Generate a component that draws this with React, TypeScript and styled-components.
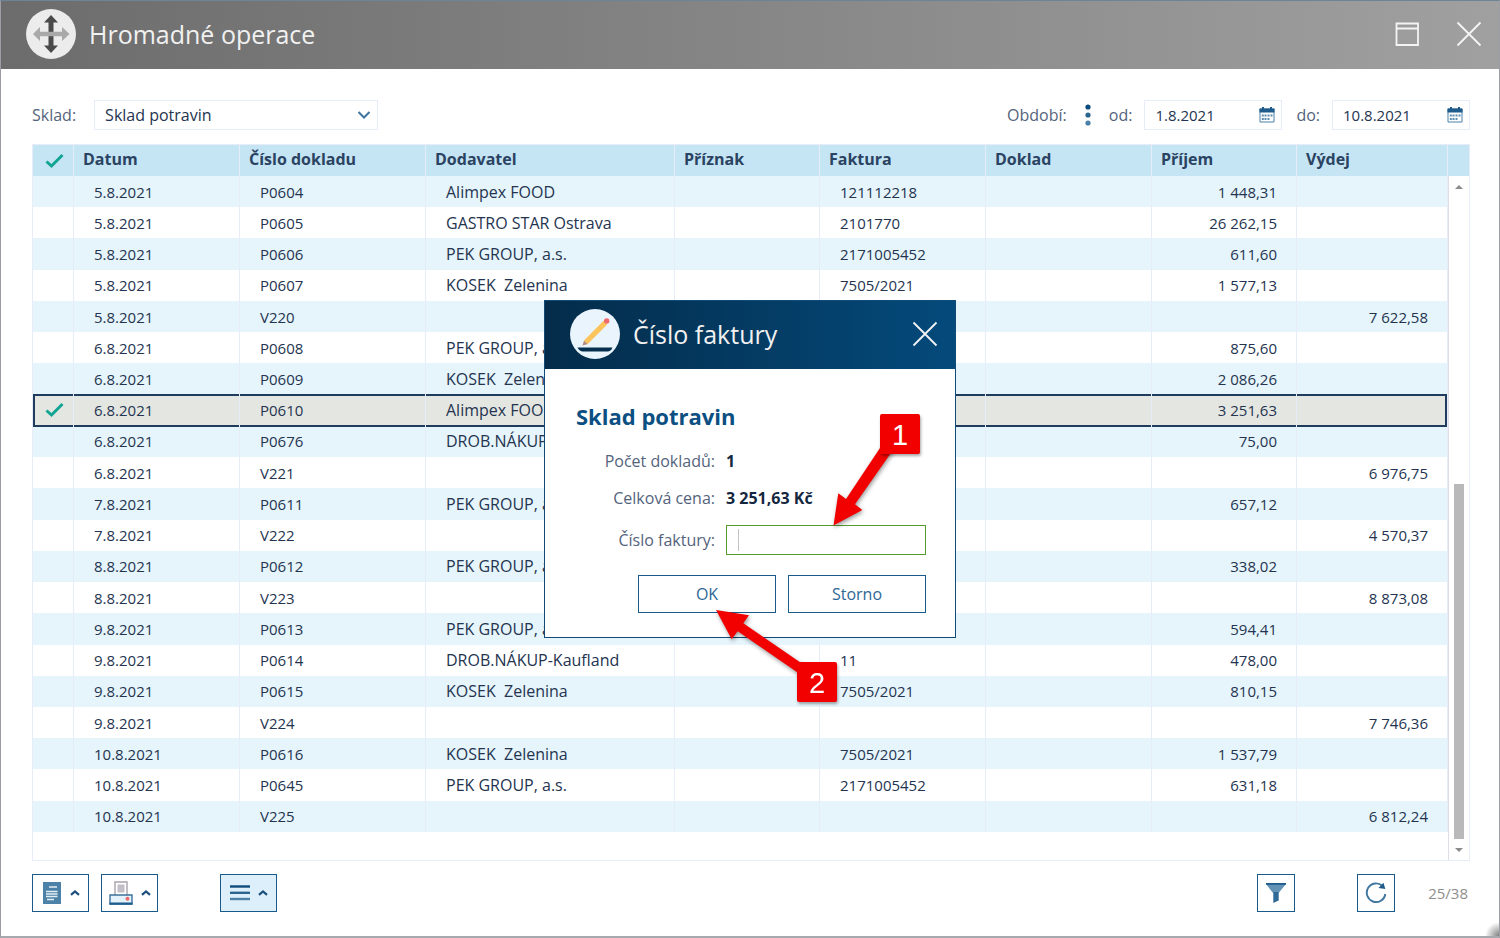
import React from 'react';
import styled, { createGlobalStyle } from 'styled-components';

const color = {
  ink: '#243450',
  label: '#54637c',
  blue: '#1a5a8a',
  navy: '#203c5c',
  line: '#e6edf9',
  head: '#c5e5f4',
  stripe: '#e6f4fb',
  selected: '#e4e6e1',
  green: '#12a594',
};

const GlobalStyle = createGlobalStyle`
  *, *::before, *::after { box-sizing: border-box; }
  body { margin: 0; background: #fff; }
  body, button, input, select {
    font-family: "Open Sans", "Noto Sans", sans-serif;
    font-size: 16px;
    line-height: 20px;
    color: ${color.ink};
  }
  button { cursor: pointer; }
`;

const Window = styled.div`
  position: relative;
  display: flex;
  flex-direction: column;
  min-height: 100vh;
  border: 1px solid #9a9da3;
  border-top-color: #6d8494;
  border-bottom: 2px solid #a6a9ae;
`;

const TitleBar = styled.header`
  display: flex;
  align-items: center;
  height: 68px;
  padding: 0 17px 2px 25px;
  background: linear-gradient(90deg, #6c6c6c, #a0a0a0);
`;

const Title = styled.h1`
  flex: 1;
  margin: 0 0 0 13px;
  font-size: 25px;
  line-height: 32px;
  font-weight: 400;
  color: #f1f1f1;
`;

const IconButton = styled.button`
  display: flex;
  padding: 0;
  border: 0;
  background: none;
  color: #f4f4f4;
`;

const WindowActions = styled.div`
  display: flex;
  gap: 37px;
`;

const Content = styled.main`
  flex: 1;
  display: flex;
  flex-direction: column;
  padding: 31px 29px 24px 31px;
`;

const Toolbar = styled.div`
  display: flex;
  align-items: center;
  justify-content: space-between;
  margin-bottom: 14px;
`;

const Group = styled.div<{ $gap: number }>`
  display: flex;
  align-items: center;
  gap: ${(p) => p.$gap}px;
`;

const Label = styled.label`
  color: ${color.label};
`;

const Field = styled.div<{ $width: number }>`
  display: flex;
  align-items: center;
  width: ${(p) => p.$width}px;
  height: 30px;
  padding-right: 6px;
  border: 1px solid ${color.line};
  background: #fff;
`;

const StoreSelect = styled.select`
  flex: 1;
  min-width: 0;
  height: 28px;
  padding: 0 0 0 10px;
  border: 0;
  appearance: none;
  background: none;
  outline: 0;
`;

const DateInput = styled.input`
  flex: 1;
  min-width: 0;
  height: 28px;
  padding: 0 0 0 10px;
  border: 0;
  background: none;
  outline: 0;
  font-size: 15px;
`;

const Panel = styled.section`
  flex: 1;
  display: flex;
  border: 1px solid ${color.line};
`;

const Grid = styled.div`
  flex: 1;
  min-width: 0;
`;

const Table = styled.table`
  width: 100%;
  height: 687px;
  table-layout: fixed;
  border-collapse: separate;
  border-spacing: 0;
`;

const Col = styled.col<{ $w?: number }>`
  width: ${(p) => (p.$w ? `${p.$w}px` : 'auto')};
`;

const Th = styled.th`
  height: 31px;
  padding: 0 0 3px 9px;
  border-right: 1px solid ${color.line};
  background: ${color.head};
  text-align: left;
  font-weight: 700;
  color: #2b4362;
  white-space: nowrap;
`;

const CheckTh = styled(Th)`
  padding: 0 0 0 12px;
  svg { display: block; }
`;

const Td = styled.td<{ $num?: boolean }>`
  padding: ${(p) => (p.$num ? '0 19px 0 0' : '0 0 0 20px')};
  border-right: 1px solid ${color.line};
  font-size: 15px;
  text-align: ${(p) => (p.$num ? 'right' : 'left')};
  white-space: pre;
  overflow: hidden;
`;

const SupplierTd = styled(Td)`
  font-size: 16px;
`;

const CheckTd = styled(Td)`
  padding-left: 12px;
  svg { display: block; }
`;

const Row = styled.tr<{ $selected?: boolean }>`
  &:nth-child(odd) td { background: ${color.stripe}; }
  &:nth-child(even) td { background: #fff; }
  ${(p) =>
    p.$selected &&
    `
    &:nth-child(n) td { position: relative; overflow: visible; background: ${color.selected}; }
    td::after {
      content: '';
      position: absolute;
      inset: -1px 0;
      border: solid ${color.navy};
      border-width: 2px 0;
    }
    td:first-child::after { border-left-width: 2px; }
    td:last-child::after { border-right-width: 2px; }
  `}
`;

const Scroll = styled.div`
  display: flex;
  flex-direction: column;
  width: 21px;
`;

const ScrollHead = styled.div`
  height: 31px;
  background: ${color.head};
`;

const Track = styled.div`
  flex: 1;
  display: flex;
  flex-direction: column;
  align-items: center;
  padding: 9px 0 8px;
  border-left: 1px solid #dcdfe6;
`;

const TrackSpace = styled.div`
  flex: 295;
`;

const Thumb = styled.div`
  flex: 354;
  width: 10px;
  margin-bottom: 9px;
  background: #b9b9b9;
`;

const Arrow = styled.div<{ $down?: boolean }>`
  width: 8px;
  height: 4px;
  background: #8c8c8c;
  clip-path: ${(p) => (p.$down ? 'polygon(0 0, 100% 0, 50% 100%)' : 'polygon(50% 0, 100% 100%, 0 100%)')};
`;

const Footer = styled.footer`
  display: flex;
  align-items: center;
  margin-top: 13px;
`;

const ToolButton = styled.button<{ $wide?: boolean; $active?: boolean }>`
  display: flex;
  align-items: center;
  justify-content: center;
  gap: 8px;
  width: ${(p) => (p.$wide ? 57 : 38)}px;
  height: 38px;
  padding: 0;
  border: 1px solid ${color.blue};
  background: ${(p) => (p.$active ? '#dceffa' : '#fff')};
  color: ${color.blue};
`;

const FooterLeft = styled.div`
  flex: 1;
  display: flex;
  gap: 12px;
  & > :last-child { margin-left: 50px; }
`;

const FooterRight = styled.div`
  display: flex;
  align-items: center;
  gap: 62px;
`;

const Count = styled.span`
  margin-right: 2px;
  font-size: 15px;
  color: #8e8e8e;
`;

const CountGroup = styled.div`
  display: flex;
  align-items: center;
  gap: 33px;
`;

const ResizeGrip = styled.div`
  position: absolute;
  right: 0;
  bottom: 0;
  width: 14px;
  height: 14px;
  background: radial-gradient(circle at 100% 100%, #808080, rgba(255, 255, 255, 0) 14px);
`;

const Overlay = styled.div`
  position: fixed;
  inset: 0;
  display: flex;
  align-items: center;
  justify-content: center;
`;

const Dialog = styled.div`
  position: relative;
  width: 412px;
  border: 1px solid #124a78;
  background: #fff;
`;

const DialogHead = styled.div`
  display: flex;
  align-items: center;
  height: 68px;
  padding: 0 17px 2px 25px;
  background: linear-gradient(90deg, #042c4a, #044a7b);
`;

const DialogBody = styled.form`
  padding: 31px 29px 24px 31px;
`;

const DialogTitle = styled.h2`
  margin: 0 0 19px;
  font-size: 22px;
  line-height: 32px;
  font-weight: 700;
  color: #0c4f82;
`;

const FormGrid = styled.div`
  display: grid;
  grid-template-columns: 139px 200px;
  column-gap: 11px;
  row-gap: 17px;
  align-items: center;
  margin-bottom: 20px;
  & > :nth-child(odd) { text-align: right; color: ${color.label}; }
`;

const Value = styled.strong`
  font-weight: 700;
  color: #14273f;
`;

const InvoiceField = styled.div`
  display: flex;
  align-items: center;
  height: 30px;
  border: 1px solid #569a2e;
  &::before {
    content: '';
    width: 1px;
    height: 22px;
    margin-left: 11px;
    background: #c4c4c4;
  }
`;

const InvoiceInput = styled.input`
  flex: 1;
  min-width: 0;
  height: 26px;
  padding: 0;
  border: 0;
  outline: 0;
  background: none;
`;

const Buttons = styled.div`
  display: flex;
  justify-content: flex-end;
  gap: 12px;
`;

const DialogButton = styled.button`
  width: 138px;
  height: 38px;
  border: 1px solid ${color.blue};
  background: #fff;
  color: #2f6796;
`;

const Arrows = styled.svg`
  position: absolute;
  left: 0;
  top: 0;
  overflow: visible;
  pointer-events: none;
  filter: drop-shadow(1px 2px 2px rgba(0, 0, 0, 0.4));
`;

const Badge = styled.span<{ $x: number; $y: number }>`
  position: absolute;
  left: ${(p) => p.$x}px;
  top: ${(p) => p.$y}px;
  width: 40px;
  height: 40px;
  border-radius: 2px;
  background: #f20000;
  box-shadow: 1px 2px 3px rgba(0, 0, 0, 0.35);
  font: 29px/42px "Liberation Sans", sans-serif;
  text-align: center;
  color: #fff;
`;

const Check = () => (
  <svg width="19" height="16" viewBox="0 0 19 16" fill="none" stroke={color.green} strokeWidth="3">
    <path d="M1.5 8.5 L6.5 13 L17.5 2" />
  </svg>
);

const Cross = () => (
  <svg width="26" height="26" viewBox="0 0 26 26" fill="none" stroke="currentColor" strokeWidth="1.8">
    <path d="M1.5 1.5 L24.5 24.5 M24.5 1.5 L1.5 24.5" />
  </svg>
);

const Maximize = () => (
  <svg width="24" height="26" viewBox="0 0 24 26" fill="none" stroke="currentColor" strokeWidth="1.8">
    <path d="M1.500 2.500 H23 V24 H1.500 Z M1.500 7.500 H23" />
  </svg>
);

const MoveIcon = () => (
  <svg width="50" height="50" viewBox="0 0 50 50">
    <circle cx="25" cy="25" r="25" fill="#ececec" />
    <path d="M25 6 L32 13.5 H27.5 V36.5 H32 L25 44 L18 36.5 H22.5 V13.5 H18 Z" fill="#4a4a4a" />
    <path d="M7 25 L14 18 V22.7 H36 V18 L43.5 25 L36 32 V27.3 H14 V32 Z" fill="#a9a9a9" />
  </svg>
);

const PencilIcon = () => (
  <svg width="50" height="50" viewBox="0 0 50 50">
    <circle cx="25" cy="25" r="25" fill="#e9f4fc" />
    <path d="M7.500 38.500 H42.500 Q41 42.500 37.500 42.500 H13 Q9.500 42.500 7.500 38.500 Z" fill="#062f4f" />
    <path d="M12.500 36.500 L14 31.500 L18 35 Z" fill="#b58a80" />
    <path d="M14 31.500 L33.500 11.700 L37.200 15.400 L17.800 35 Z" fill="#fcc45c" />
    <circle cx="36.700" cy="12" r="2.700" fill="#f0696b" />
  </svg>
);

const ChevronDown = () => (
  <svg width="14" height="10" viewBox="0 0 14 10" fill="none" stroke="#3f74a0" strokeWidth="2">
    <path d="M1.500 2 L7 7.500 L12.500 2" />
  </svg>
);

const ChevronUp = () => (
  <svg width="10" height="8" viewBox="0 0 10 8" fill="none" stroke="#1b4f7d" strokeWidth="2.200">
    <path d="M1 5.800 L5 2.400 L9 5.800" />
  </svg>
);

const Calendar = () => (
  <svg width="16" height="16" viewBox="0 0 16 16">
    <path d="M1 2 H15 V15 H1 Z" fill="#fff" stroke="#4a81a8" />
    <path d="M.5 1.500 H15.500 V5.500 H.5 Z M3 0 H5 V2 H3 Z M11 0 H13 V2 H11 Z" fill="#1f5b8b" />
    <g fill="#5b8cb0">
      <path d="M5.500 7.500h2v2h-2z M8.500 7.500h2v2h-2z M11.500 7.500h2v2h-2z M2.800 7.500h2v2h-2z" />
      <path d="M2.800 11h2v2h-2z M5.500 11h2v2h-2z M8.500 11h2v2h-2z" />
    </g>
  </svg>
);

const Dots = () => (
  <svg width="6" height="22" viewBox="0 0 6 22">
    <circle cx="3" cy="3" r="2.600" fill="#0d4b7c" />
    <circle cx="3" cy="11" r="2.600" fill="#2a648f" />
    <circle cx="3" cy="19" r="2.600" fill="#4b81a8" />
  </svg>
);

const DocumentIcon = () => (
  <svg width="20" height="22" viewBox="0 0 20 22">
    <rect x="1" width="18" height="22" fill="#4c82a7" />
    <path d="M7 5 H15 M4 9.500 H15.500 M4 12 H15.500 M4 14.500 H15.500 M5 17.500 H12" stroke="#e3edf4" strokeWidth="1.400" />
  </svg>
);

const PrinterIcon = () => (
  <svg width="24" height="24" viewBox="0 0 24 24">
    <path d="M6 15 V1 H18 V15" fill="#fff" stroke="#a8a2ac" strokeWidth="1.400" />
    <rect x="8.500" y="3.500" width="7" height="8" fill="#c3bfc8" />
    <path d="M1 14 H23 V23 H1 Z" fill="#e3f2fb" stroke="#3a739d" strokeWidth="1.400" />
    <path d="M0.500 21.500 H23.500 V23.700 H0.500 Z" fill="#1f5b8b" />
    <circle cx="18.500" cy="17.800" r="2" fill="#f0696b" />
  </svg>
);

const MenuIcon = () => (
  <svg width="20" height="16" viewBox="0 0 20 16" strokeWidth="2.400">
    <path d="M0 1.500 H20" stroke="#0d4b7c" />
    <path d="M0 7.800 H20" stroke="#2a648f" />
    <path d="M0 14 H20" stroke="#4b81a8" />
  </svg>
);

const FilterIcon = () => (
  <svg width="20" height="20" viewBox="0 0 20 20">
    <path d="M0 1 H20 L13 9.500 V10 H7 Z" fill="#6293b5" />
    <path d="M0 0 H20 V1.800 H0 Z" fill="#1f5b8b" />
    <path d="M7.300 9 H12.700 V17.500 L7.300 20 Z" fill="#2f6a97" />
  </svg>
);

const RefreshIcon = () => (
  <svg width="22" height="22" viewBox="0 0 22 22" fill="none">
    <path d="M17.500 4 A9.300 9.300 0 1 0 20.300 12" stroke="#3f77a1" strokeWidth="1.900" />
    <path d="M18.500 .8 L20.300 7 L13.500 6 Z" fill="#1f5b8b" />
  </svg>
);

type Entry = {
  date: string;
  doc: string;
  supplier?: string;
  invoice?: string;
  income?: string;
  outcome?: string;
  selected?: boolean;
};

const entries: Entry[] = [
  { date: '5.8.2021', doc: 'P0604', supplier: 'Alimpex FOOD', invoice: '121112218', income: '1 448,31' },
  { date: '5.8.2021', doc: 'P0605', supplier: 'GASTRO STAR Ostrava', invoice: '2101770', income: '26 262,15' },
  { date: '5.8.2021', doc: 'P0606', supplier: 'PEK GROUP, a.s.', invoice: '2171005452', income: '611,60' },
  { date: '5.8.2021', doc: 'P0607', supplier: 'KOSEK  Zelenina', invoice: '7505/2021', income: '1 577,13' },
  { date: '5.8.2021', doc: 'V220', outcome: '7 622,58' },
  { date: '6.8.2021', doc: 'P0608', supplier: 'PEK GROUP, a.s.', invoice: '2171005452', income: '875,60' },
  { date: '6.8.2021', doc: 'P0609', supplier: 'KOSEK  Zelenina', invoice: '7505/2021', income: '2 086,26' },
  { date: '6.8.2021', doc: 'P0610', supplier: 'Alimpex FOOD', income: '3 251,63', selected: true },
  { date: '6.8.2021', doc: 'P0676', supplier: 'DROB.NÁKUP-Kaufland', invoice: '11', income: '75,00' },
  { date: '6.8.2021', doc: 'V221', outcome: '6 976,75' },
  { date: '7.8.2021', doc: 'P0611', supplier: 'PEK GROUP, a.s.', invoice: '2171005452', income: '657,12' },
  { date: '7.8.2021', doc: 'V222', outcome: '4 570,37' },
  { date: '8.8.2021', doc: 'P0612', supplier: 'PEK GROUP, a.s.', invoice: '2171005452', income: '338,02' },
  { date: '8.8.2021', doc: 'V223', outcome: '8 873,08' },
  { date: '9.8.2021', doc: 'P0613', supplier: 'PEK GROUP, a.s.', invoice: '2171005452', income: '594,41' },
  { date: '9.8.2021', doc: 'P0614', supplier: 'DROB.NÁKUP-Kaufland', invoice: '11', income: '478,00' },
  { date: '9.8.2021', doc: 'P0615', supplier: 'KOSEK  Zelenina', invoice: '7505/2021', income: '810,15' },
  { date: '9.8.2021', doc: 'V224', outcome: '7 746,36' },
  { date: '10.8.2021', doc: 'P0616', supplier: 'KOSEK  Zelenina', invoice: '7505/2021', income: '1 537,79' },
  { date: '10.8.2021', doc: 'P0645', supplier: 'PEK GROUP, a.s.', invoice: '2171005452', income: '631,18' },
  { date: '10.8.2021', doc: 'V225', outcome: '6 812,24' },
];

const headings = ['Datum', 'Číslo dokladu', 'Dodavatel', 'Příznak', 'Faktura', 'Doklad', 'Příjem', 'Výdej'];

export default function App() {
  return (
    <>
      <GlobalStyle />
      <Window>
        <TitleBar>
          <MoveIcon />
          <Title>Hromadné operace</Title>
          <WindowActions>
            <IconButton aria-label="Maximalizovat"><Maximize /></IconButton>
            <IconButton aria-label="Zavřít"><Cross /></IconButton>
          </WindowActions>
        </TitleBar>
        <Content>
          <Toolbar>
            <Group $gap={18}>
              <Label htmlFor="store">Sklad:</Label>
              <Field $width={284}>
                <StoreSelect id="store"><option>Sklad potravin</option></StoreSelect>
                <ChevronDown />
              </Field>
            </Group>
            <Group $gap={14}>
              <Group $gap={18}>
                <Label as="span">Období:</Label>
                <Dots />
                <Group $gap={12}>
                  <Label htmlFor="from">od:</Label>
                  <Field $width={138}>
                    <DateInput id="from" defaultValue="1.8.2021" />
                    <Calendar />
                  </Field>
                </Group>
              </Group>
              <Group $gap={12}>
                <Label htmlFor="to">do:</Label>
                <Field $width={138}>
                  <DateInput id="to" defaultValue="10.8.2021" />
                  <Calendar />
                </Field>
              </Group>
            </Group>
          </Toolbar>
          <Panel>
            <Grid>
              <Table>
                <colgroup>
                  <Col $w={41} />
                  <Col $w={166} />
                  <Col $w={186} />
                  <Col />
                  <Col $w={145} />
                  <Col $w={166} />
                  <Col $w={166} />
                  <Col $w={145} />
                  <Col $w={151} />
                </colgroup>
                <thead>
                  <tr>
                    <CheckTh aria-label="Výběr"><Check /></CheckTh>
                    {headings.map((h) => <Th key={h}>{h}</Th>)}
                  </tr>
                </thead>
                <tbody>
                  {entries.map((e) => (
                    <Row key={e.doc} $selected={e.selected}>
                      <CheckTd>{e.selected && <Check />}</CheckTd>
                      <Td>{e.date}</Td>
                      <Td>{e.doc}</Td>
                      <SupplierTd>{e.supplier}</SupplierTd>
                      <Td />
                      <Td>{e.invoice}</Td>
                      <Td />
                      <Td $num>{e.income}</Td>
                      <Td $num>{e.outcome}</Td>
                    </Row>
                  ))}
                </tbody>
              </Table>
            </Grid>
            <Scroll>
              <ScrollHead />
              <Track>
                <Arrow />
                <TrackSpace />
                <Thumb />
                <Arrow $down />
              </Track>
            </Scroll>
          </Panel>
          <Footer>
            <FooterLeft>
              <ToolButton $wide aria-label="Doklady"><DocumentIcon /><ChevronUp /></ToolButton>
              <ToolButton $wide aria-label="Tisk"><PrinterIcon /><ChevronUp /></ToolButton>
              <ToolButton $wide $active aria-label="Nabídka"><MenuIcon /><ChevronUp /></ToolButton>
            </FooterLeft>
            <FooterRight>
              <ToolButton aria-label="Filtr"><FilterIcon /></ToolButton>
              <CountGroup>
                <ToolButton aria-label="Obnovit"><RefreshIcon /></ToolButton>
                <Count>25/38</Count>
              </CountGroup>
            </FooterRight>
          </Footer>
        </Content>
        <ResizeGrip />
      </Window>
      <Overlay>
        <Dialog role="dialog" aria-labelledby="dialog-title">
          <DialogHead>
            <PencilIcon />
            <Title as="div" id="dialog-title">Číslo faktury</Title>
            <IconButton aria-label="Zavřít dialog"><Cross /></IconButton>
          </DialogHead>
          <DialogBody onSubmit={(e) => e.preventDefault()}>
            <DialogTitle>Sklad potravin</DialogTitle>
            <FormGrid>
              <span>Počet dokladů:</span>
              <Value>1</Value>
              <span>Celková cena:</span>
              <Value>3 251,63 Kč</Value>
              <Label htmlFor="invoice">Číslo faktury:</Label>
              <InvoiceField><InvoiceInput id="invoice" /></InvoiceField>
            </FormGrid>
            <Buttons>
              <DialogButton type="submit">OK</DialogButton>
              <DialogButton type="button">Storno</DialogButton>
            </Buttons>
          </DialogBody>
          <Arrows width="412" height="400" viewBox="0 0 412 400" fill="#f20000" aria-hidden="true">
            <path d="M288.500 224.500 L293.300 192.300 L301 198 L345 132 L360 132 L310 203.300 L317.300 209 Z" />
            <path d="M171 309 L204 314.300 L198.300 322.300 L262 366 L262 378 L192.700 330.300 L186.700 338.300 Z" />
          </Arrows>
          <Badge $x={335} $y={113}>1</Badge>
          <Badge $x={252} $y={361}>2</Badge>
        </Dialog>
      </Overlay>
    </>
  );
}
